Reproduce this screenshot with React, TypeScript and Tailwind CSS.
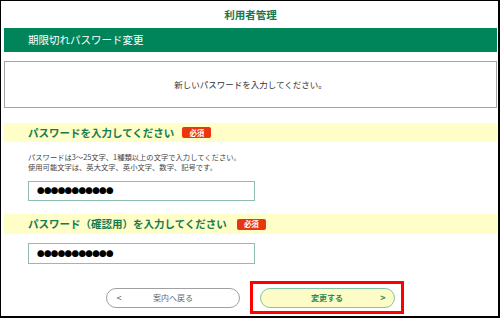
const jp = '"Noto Sans CJK JP", "Liberation Sans", sans-serif';

function Required({ className }: { className?: string }) {
  return (
    <span
      className={`inline-flex items-center justify-center w-[29px] h-[11px] rounded-[2px] bg-[#e8360e] text-white text-[7.5px] font-bold leading-none ${className ?? ''}`}
    >
      必須
    </span>
  );
}

function PasswordBox({ className }: { className?: string }) {
  return (
    <div
      className={`ml-[24px] w-[227px] border border-[#8fbdae] flex items-center pl-[8px] ${className ?? ''}`}
    >
      <span className="text-[7.5px] leading-none tracking-[-0.6px] text-black">●●●●●●●●●●●</span>
    </div>
  );
}

export default function App() {
  return (
    <div
      className="w-[500px] h-[318px] bg-white border-l border-t border-r-2 border-b-2 border-black pl-[3px] pr-[1px]"
      style={{ fontFamily: jp }}
    >
      <div className="h-[27px] flex items-center justify-center">
        <span className="text-[10.5px] font-bold text-[#17774f]">利用者管理</span>
      </div>

      <div className="h-[24px] bg-[#00845a] flex items-center pl-[24px]">
        <span className="text-[10.5px] text-white">期限切れパスワード変更</span>
      </div>

      <div className="mt-[9px] h-[47px] border border-[#a5a5a5] flex items-center justify-center">
        <span className="text-[8.5px] text-[#333333]">新しいパスワードを入力してください。</span>
      </div>

      <div className="mt-[15px] h-[19px] bg-[#fffdc8] flex items-center pl-[24px]">
        <span className="text-[10.5px] font-bold text-[#157c4f]">パスワードを入力してください</span>
        <Required className="ml-[8px]" />
      </div>

      <div className="mt-[10px] pl-[24px] text-[7.3px] leading-[10px] text-[#444444]">
        <p>パスワードは3～25文字、1種類以上の文字で入力してください。</p>
        <p>使用可能文字は、英大文字、英小文字、数字、記号です。</p>
      </div>

      <PasswordBox className="mt-[9px] h-[20px]" />

      <div className="mt-[13px] h-[20px] bg-[#fffdc8] flex items-center pl-[24px]">
        <span className="text-[10.5px] font-bold text-[#157c4f]">パスワード（確認用）を入力してください</span>
        <Required className="ml-[10px]" />
      </div>

      <PasswordBox className="mt-[9px] h-[21px]" />

      <div className="mt-[17px] flex items-center">
        <button className="ml-[102px] w-[134px] h-[20px] rounded-full border border-[#a0a0a0] bg-white flex items-center px-[8px]">
          <span className="w-[8px] text-[9px] text-[#555555] leading-none">&lt;</span>
          <span className="flex-1 text-center text-[8px] text-[#666666]">案内へ戻る</span>
          <span className="w-[8px]" />
        </button>
        <div className="ml-[10px] w-[154px] h-[33px] border-[3px] border-[#ff0000] flex items-center justify-center">
          <button className="w-[135px] h-[20px] rounded-full border border-[#86c3a2] bg-[#fdfcc6] flex items-center px-[8px]">
            <span className="w-[8px]" />
            <span className="flex-1 text-center text-[8px] font-bold text-[#2b8a5c]">変更する</span>
            <span className="w-[8px] text-right text-[9px] font-bold text-[#2b8a5c] leading-none">&gt;</span>
          </button>
        </div>
      </div>
    </div>
  );
}
